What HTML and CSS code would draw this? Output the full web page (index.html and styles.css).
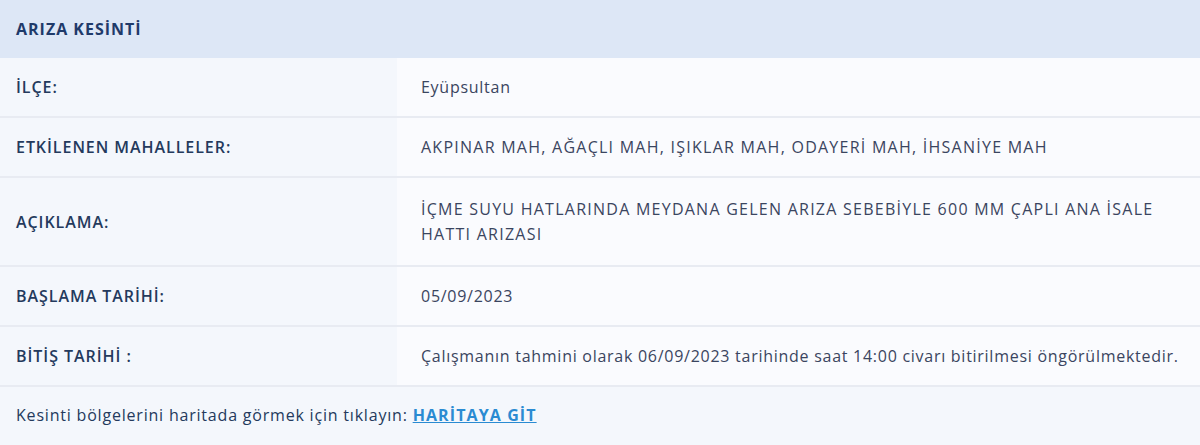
FILE: index.html
```html
<!DOCTYPE html>
<html lang="tr">
<head>
    <meta charset="UTF-8">
    <meta name="viewport" content="width=device-width, initial-scale=1.0">
    <title>Arıza Kesinti</title>
    <link rel="stylesheet" href="styles.css">
</head>
<body>

    <div class="panel">
        <div class="panel-head">ARIZA KESİNTİ</div>
        <div class="info-row">
            <div class="label">İLÇE:</div>
            <div class="value">Eyüpsultan</div>
        </div>
        <div class="info-row">
            <div class="label">ETKİLENEN MAHALLELER:</div>
            <div class="value caps">AKPINAR MAH, AĞAÇLI MAH, IŞIKLAR MAH, ODAYERİ MAH, İHSANİYE MAH</div>
        </div>
        <div class="info-row tall">
            <div class="label">AÇIKLAMA:</div>
            <div class="value caps">İÇME SUYU HATLARINDA MEYDANA GELEN ARIZA SEBEBİYLE 600 MM ÇAPLI ANA İSALE<br>HATTI ARIZASI</div>
        </div>
        <div class="info-row">
            <div class="label">BAŞLAMA TARİHİ:</div>
            <div class="value">05/09/2023</div>
        </div>
        <div class="info-row">
            <div class="label">BİTİŞ TARİHİ :</div>
            <div class="value">Çalışmanın tahmini olarak 06/09/2023 tarihinde saat 14:00 civarı bitirilmesi öngörülmektedir.</div>
        </div>
        <div class="panel-foot">
            Kesinti bölgelerini haritada görmek için tıklayın: <a href="#">HARİTAYA GİT</a>
        </div>
    </div>

</body>
</html>
```

FILE: styles.css
```css
body {
    margin: 0;
    font-family: "Open Sans", "Noto Sans", sans-serif;
    background-color: #f4f7fc;
}
.panel {
    width: 1200px;
}
.panel-head {
    height: 58px;
    display: flex;
    align-items: center;
    padding-left: 16px;
    background-color: #dde7f6;
    color: #1f3a6a;
    font-size: 16px;
    font-weight: bold;
    letter-spacing: 1px;
}
.info-row {
    display: grid;
    grid-template-columns: 397px 1fr;
    height: 58px;
    border-bottom: 2px solid #e8ebf2;
}
.info-row.tall {
    height: 87px;
}
.label {
    display: flex;
    align-items: center;
    padding-left: 16px;
    background-color: #f4f7fc;
    color: #243a5d;
    font-size: 16px;
    font-weight: 600;
    letter-spacing: 0.95px;
}
.value {
    display: flex;
    align-items: center;
    padding-left: 24px;
    background-color: #fafbfe;
    color: #3a4560;
    font-size: 16px;
    line-height: 25px;
    letter-spacing: 0.73px;
}
.value.caps {
    letter-spacing: 1.25px;
}
.panel-foot {
    height: 57px;
    line-height: 57px;
    padding-left: 16px;
    color: #243a5d;
    font-size: 16px;
    letter-spacing: 0.8px;
}
.panel-foot a {
    color: #2a8bd2;
    font-weight: bold;
    letter-spacing: 1.1px;
}
```
